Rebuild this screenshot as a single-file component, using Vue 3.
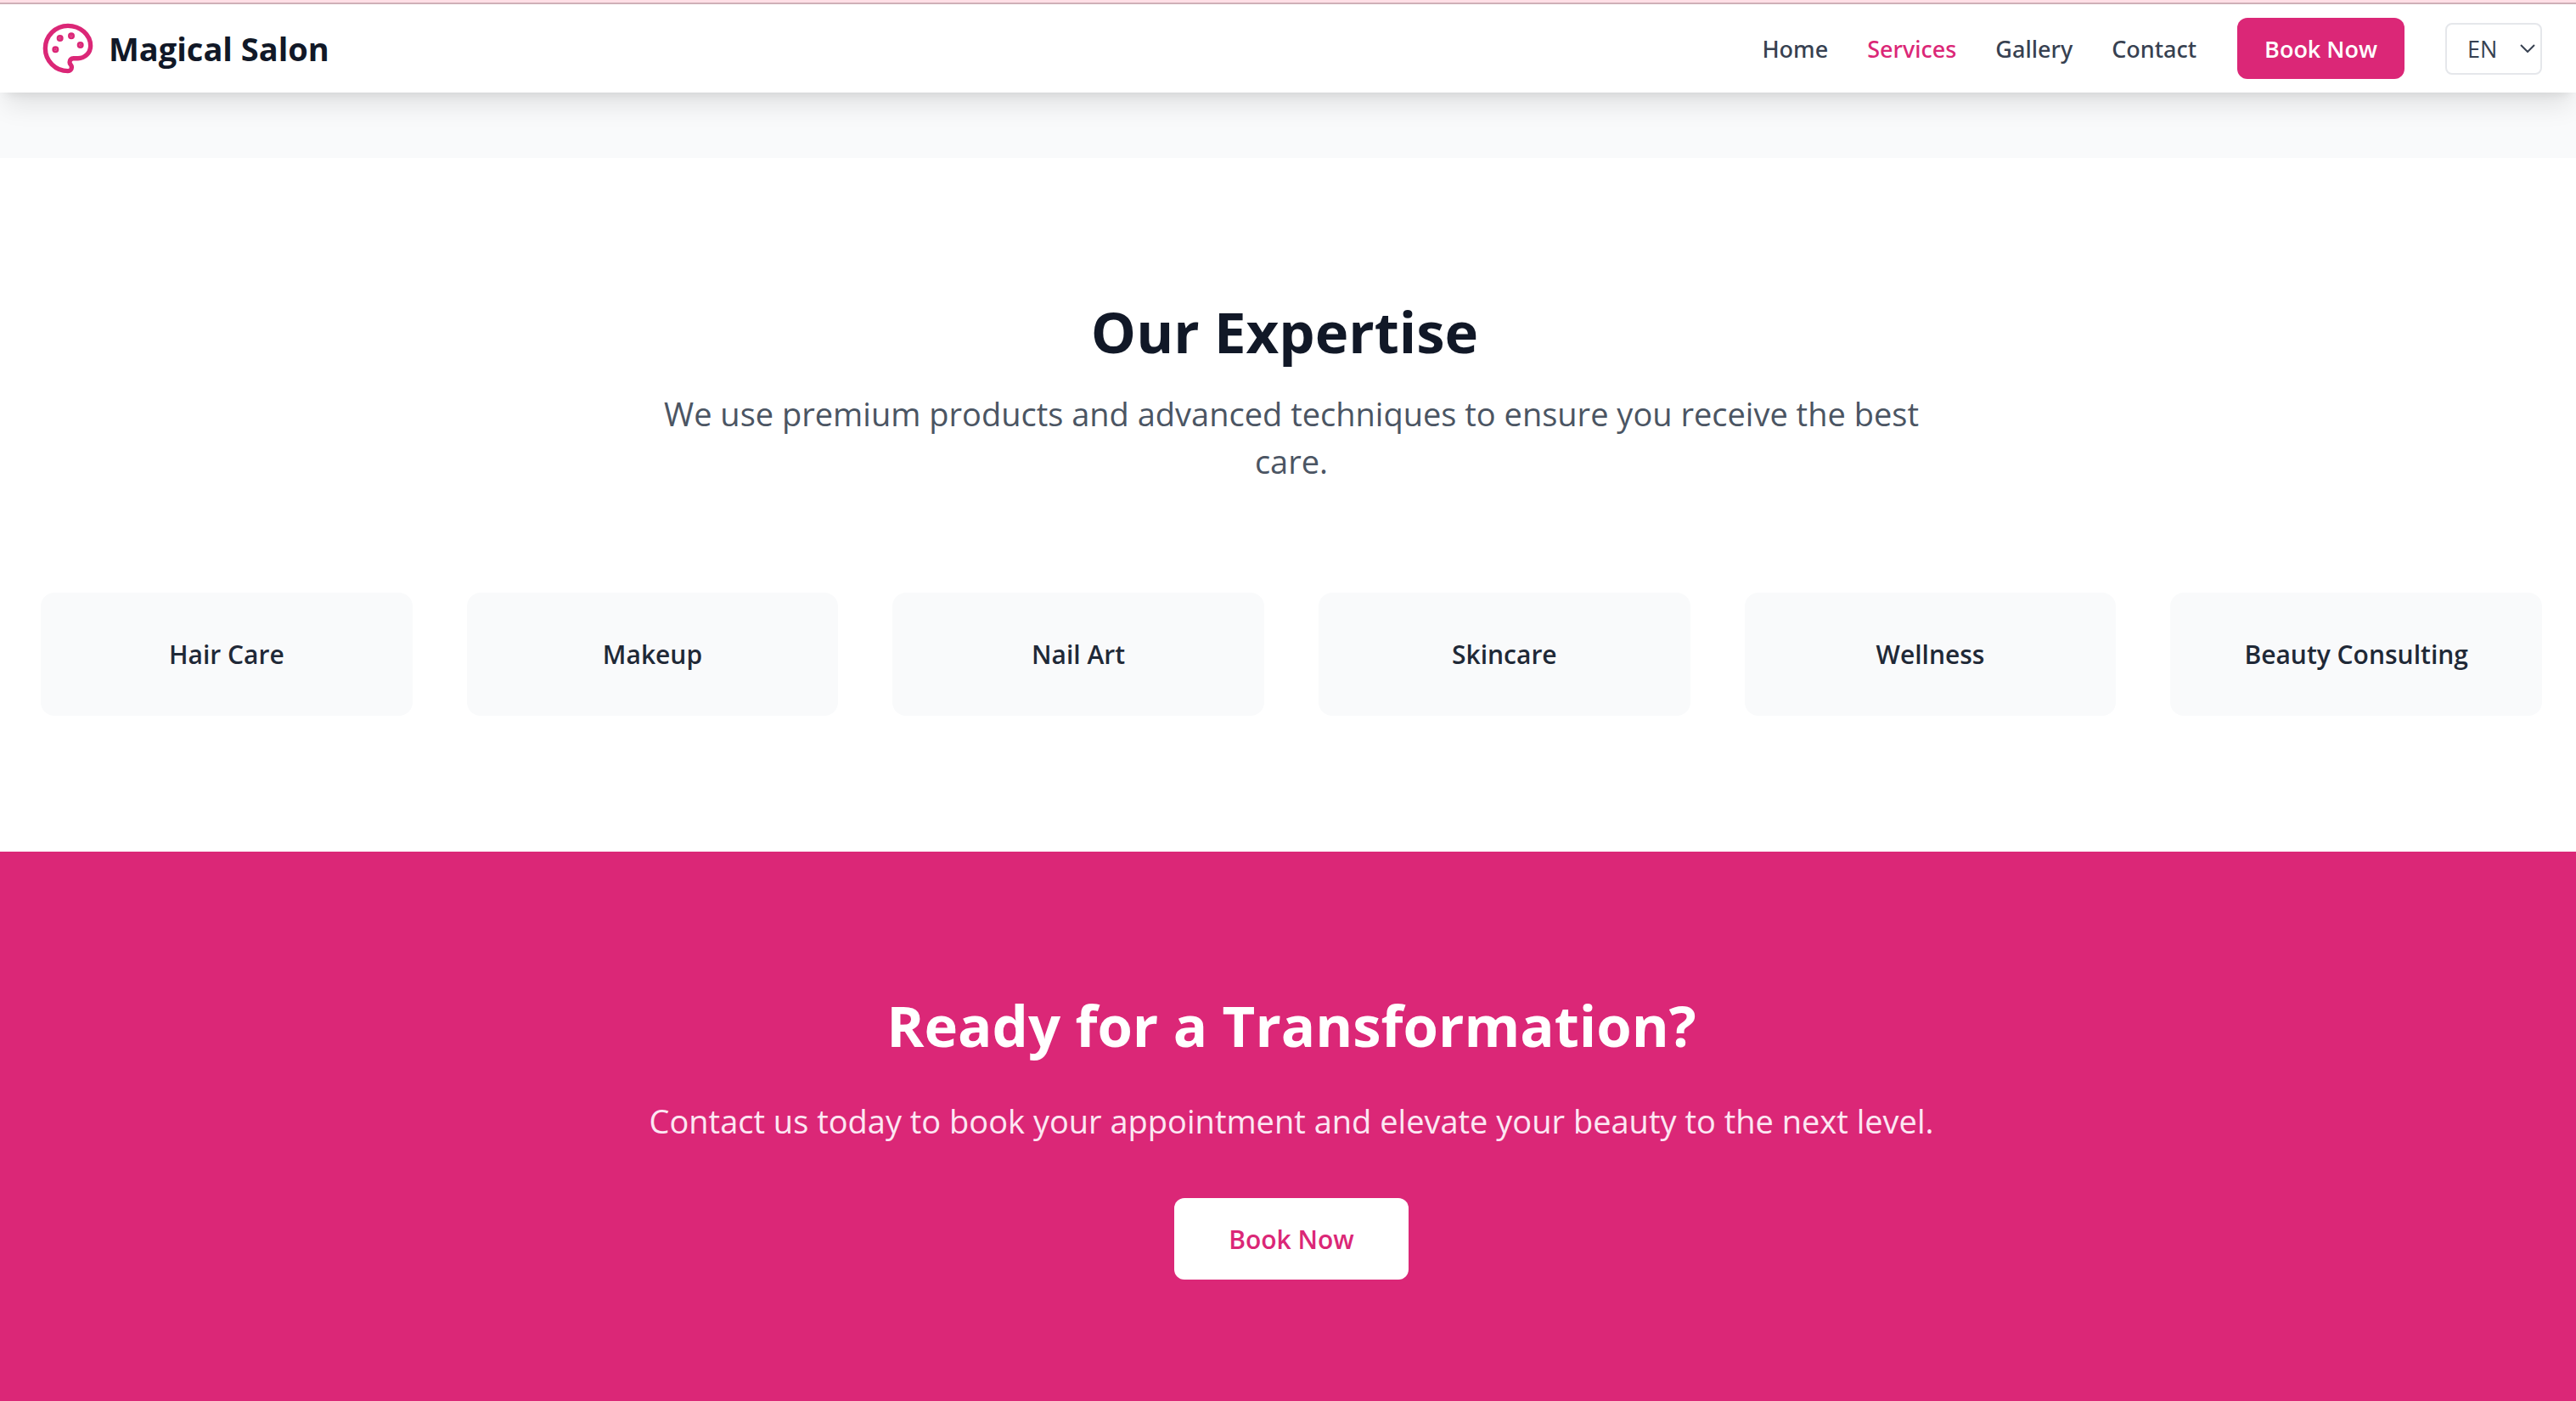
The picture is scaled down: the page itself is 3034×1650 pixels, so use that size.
<script setup>
import { ref } from 'vue'

const language = ref('EN')
const languages = ['EN', 'FR', 'AR']
const links = [
  { label: 'Home', href: '#home' },
  { label: 'Services', href: '#services', active: true },
  { label: 'Gallery', href: '#gallery' },
  { label: 'Contact', href: '#contact' },
]
const skills = ['Hair Care', 'Makeup', 'Nail Art', 'Skincare', 'Wellness', 'Beauty Consulting']
</script>

<template>
  <div class="page">
    <div class="strip"></div>
    <header class="header">
      <a class="brand" href="#home">
        <svg class="brand-icon" viewBox="0 0 24 24" fill="none" stroke="currentColor" stroke-width="2" stroke-linecap="round" stroke-linejoin="round" aria-hidden="true">
          <circle cx="13.5" cy="6.5" r=".5" fill="currentColor" />
          <circle cx="17.5" cy="10.5" r=".5" fill="currentColor" />
          <circle cx="8.5" cy="7.5" r=".5" fill="currentColor" />
          <circle cx="6.5" cy="12.5" r=".5" fill="currentColor" />
          <path d="M12 2C6.5 2 2 6.5 2 12s4.500 10 10 10c.926 0 1.648-.746 1.648-1.688 0-.437-.180-.835-.437-1.125-.290-.289-.438-.652-.438-1.125a1.640 1.640 0 0 1 1.668-1.668h1.996c3.051 0 5.555-2.503 5.555-5.554C21.965 6.012 17.461 2 12 2z" />
        </svg>
        <span>Magical Salon</span>
      </a>
      <nav class="nav">
        <div class="links">
          <a v-for="link in links" :key="link.label" class="link" :class="{ active: link.active }" :href="link.href">{{ link.label }}</a>
        </div>
        <button class="book" type="button">Book Now</button>
        <div class="language">
          <select v-model="language" aria-label="Language">
            <option v-for="code in languages" :key="code">{{ code }}</option>
          </select>
          <svg class="chevron" viewBox="0 0 18 10" fill="none" stroke="currentColor" stroke-width="2" aria-hidden="true">
            <path d="M1 1l8 8 8-8" />
          </svg>
        </div>
      </nav>
    </header>

    <div class="band"></div>

    <main class="main">
      <section class="expertise">
        <h2 class="title shifted">Our Expertise</h2>
        <p class="lead">We use premium products and advanced techniques to ensure you receive the best care.</p>
        <ul class="cards">
          <li v-for="skill in skills" :key="skill" class="card">{{ skill }}</li>
        </ul>
      </section>

      <section class="cta">
        <h2 class="title">Ready for a Transformation?</h2>
        <p class="lead">Contact us today to book your appointment and elevate your beauty to the next level.</p>
        <button class="cta-button" type="button">Book Now</button>
      </section>
    </main>
  </div>
</template>

<style>
body {
  margin: 0;
}
</style>

<style scoped>
.page {
  display: flex;
  flex-direction: column;
  min-height: 100vh;
  background: #fff;
  color: #111827;
  font-family: "Open Sans", "Noto Sans", sans-serif;
}

.strip {
  height: 3px;
  background: #ffdfe6;
  border-bottom: 2px solid #cfb0b7;
}

.header {
  position: relative;
  display: flex;
  align-items: center;
  justify-content: space-between;
  height: 104px;
  padding: 0 40px 0 48px;
  background: #fff;
  box-shadow: 0 20px 30px -6px rgba(0, 0, 0, 0.1), 0 8px 12px -8px rgba(0, 0, 0, 0.1);
}

.brand {
  display: flex;
  align-items: center;
  gap: 16px;
  color: #111827;
  font-size: 38px;
  font-weight: 700;
  text-decoration: none;
}

.brand-icon {
  width: 64px;
  height: 64px;
  color: #db2777;
}

.nav {
  display: flex;
  align-items: center;
  gap: 48px;
}

.links {
  display: flex;
  gap: 46px;
}

.link {
  color: #374151;
  font-family: "Noto Sans", sans-serif;
  font-size: 27px;
  font-weight: 500;
  text-decoration: none;
}

.link.active {
  color: #db2777;
}

.book {
  height: 72px;
  padding: 0 32px;
  border: 0;
  border-radius: 12px;
  background: #db2777;
  color: #fff;
  font: inherit;
  font-size: 27px;
  font-weight: 600;
}

.language {
  position: relative;
  color: #374151;
}

.language select {
  appearance: none;
  box-sizing: border-box;
  width: 114px;
  height: 61px;
  padding: 0 0 0 24px;
  border: 2px solid #e5e7eb;
  border-radius: 8px;
  background: #fff;
  color: inherit;
  font: inherit;
  font-size: 27px;
}

.chevron {
  position: absolute;
  top: 25px;
  right: 8px;
  width: 18px;
  height: 10px;
  pointer-events: none;
}

.band {
  height: 77px;
  background: #f9fafb;
}

.main {
  display: flex;
  flex: 1;
  flex-direction: column;
}

.expertise {
  padding: 164px 40px 160px 48px;
  text-align: center;
}

.title {
  margin: 0;
  font-size: 67px;
  font-weight: 700;
  line-height: 80px;
}

.title.shifted {
  padding-right: 16px;
}

.lead {
  max-width: 1536px;
  margin: 0 auto;
  font-size: 38px;
  line-height: 56px;
}

.expertise .lead {
  margin-top: 29px;
  color: #4b5563;
}

.cards {
  display: grid;
  grid-template-columns: repeat(6, 1fr);
  gap: 64px;
  margin: 127px 0 0;
  padding: 0;
  list-style: none;
}

.card {
  padding: 49px 0 48px;
  border-radius: 16px;
  background: #f9fafb;
  color: #1f2937;
  font-size: 30px;
  font-weight: 600;
  line-height: 48px;
}

.cta {
  display: flex;
  flex: 1;
  flex-direction: column;
  align-items: center;
  padding: 164px 40px 128px 48px;
  background: #db2777;
  color: #fff;
  text-align: center;
}

.cta .lead {
  margin-top: 45px;
  color: #fce7f3;
}

.cta-button {
  height: 96px;
  margin-top: 63px;
  padding: 0 64px;
  border: 0;
  border-radius: 12px;
  background: #fff;
  color: #db2777;
  font: inherit;
  font-size: 30px;
  font-weight: 600;
}
</style>
